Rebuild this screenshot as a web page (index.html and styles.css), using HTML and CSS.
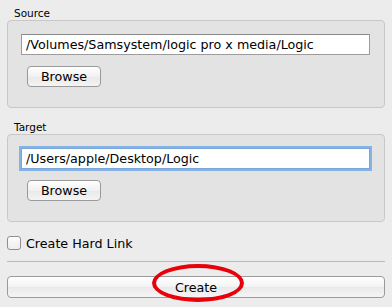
FILE: index.html
```html
<!DOCTYPE html>
<html lang="en">
<head>
    <meta charset="UTF-8">
    <title>Create Link</title>
    <link rel="stylesheet" href="styles.css">
</head>
<body>
<div class="window">
    <div class="group-label">Source</div>
    <div class="group">
        <input type="text" class="path" value="/Volumes/Samsystem/logic pro x media/Logic">
        <button class="browse">Browse</button>
    </div>

    <div class="group-label second">Target</div>
    <div class="group">
        <input type="text" class="path focused" value="/Users/apple/Desktop/Logic">
        <button class="browse">Browse</button>
    </div>

    <label class="check-row">
        <span class="checkbox"></span>
        <span>Create Hard Link</span>
    </label>

    <div class="separator"></div>

    <div class="create-row">
        <button class="create">Create</button>
        <span class="highlight"></span>
    </div>
</div>
</body>
</html>
```

FILE: styles.css
```css
body {
    margin: 0;
    background: #ececec;
    font-family: "DejaVu Sans", "Liberation Sans", sans-serif;
    font-size: 12px;
    color: #000;
}
.window {
    width: 378px;
    height: 307px;
    padding: 7px 7px 0 7px;
    box-sizing: content-box;
}
.group-label {
    font-size: 10.5px;
    height: 13px;
    line-height: 13px;
    padding-left: 7px;
}
.group-label.second {
    margin-top: 13px;
}
.group {
    border: 1px solid #c8c8c8;
    border-radius: 4px;
    background: #e3e3e3;
    padding: 13px 14px 20px 13px;
}
.path {
    display: block;
    width: 100%;
    height: 21px;
    box-sizing: border-box;
    margin: 0;
    padding: 0 4px;
    border: 1px solid #9c9c9c;
    border-top-color: #8a8a8a;
    border-radius: 0;
    background: #fff;
    font-family: inherit;
    font-size: 12.7px;
    color: #000;
    outline: none;
}
.path.focused {
    border-color: #7aa7d9;
    box-shadow: 0 0 0 2px #86b3e6;
}
.browse {
    display: block;
    margin: 11px 0 0 6px;
    width: 74px;
    height: 21px;
    padding: 0;
    border: 1px solid #9a9a9a;
    border-radius: 4px;
    background: linear-gradient(#ffffff, #f1f1f1 50%, #e9e9e9 51%, #f4f4f4);
    font-family: inherit;
    font-size: 12.7px;
    color: #000;
}
.check-row {
    display: flex;
    align-items: center;
    margin-top: 14px;
    height: 14px;
    font-size: 12.7px;
}
.checkbox {
    width: 12px;
    height: 12px;
    border: 1px solid #8f8f8f;
    border-radius: 3px;
    background: linear-gradient(#fdfdfd, #ededed);
    margin-right: 5px;
}
.separator {
    height: 1px;
    background: #b9b9b9;
    margin-top: 11px;
}
.create-row {
    position: relative;
    margin-top: 14px;
}
.create {
    display: block;
    width: 100%;
    height: 22px;
    padding: 0;
    border: 1px solid #9a9a9a;
    border-radius: 4px;
    background: linear-gradient(#ffffff, #f3f3f3 50%, #e9e9e9 51%, #f5f5f5);
    font-family: inherit;
    font-size: 12.7px;
    color: #000;
}
.highlight {
    position: absolute;
    left: 145px;
    top: -12px;
    width: 84px;
    height: 30px;
    border: 4px solid #e8000b;
    border-radius: 50%;
}
```
